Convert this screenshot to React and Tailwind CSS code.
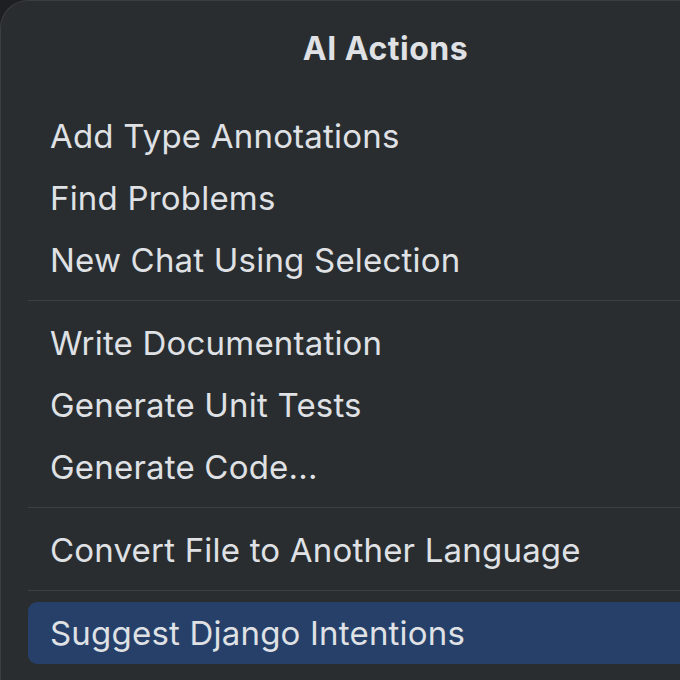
import React from 'react';

const groups = [
  ['Add Type Annotations', 'Find Problems', 'New Chat Using Selection'],
  ['Write Documentation', 'Generate Unit Tests', 'Generate Code...'],
  ['Convert File to Another Language'],
  ['Suggest Django Intentions'],
];

const selected = 'Suggest Django Intentions';

const App = () => {
  return (
    <div className="w-[680px] h-[680px] overflow-hidden bg-[#1e1f22]">
      <div
        className="w-[770px] h-[700px] bg-[#2a2d30] rounded-tl-[28px] border-t border-l border-[#3a3d41] text-[#dfe1e5]"
        style={{ fontFamily: 'Inter, "Noto Sans", sans-serif' }}
      >
        {/* Header */}
        <div className="h-[104px] flex items-start justify-center pt-[29px]">
          <h1 className="text-[32px] font-bold leading-[38px] tracking-[0.5px]">AI Actions</h1>
        </div>

        {/* Items */}
        <div className="pl-[27px]">
          {groups.map((group, gi) => (
            <div key={gi}>
              {gi > 0 && (
                <div className="pt-[9px] pb-[11px]">
                  <div className="h-px bg-[#3c3f43]" />
                </div>
              )}
              {group.map(item => (
                <div
                  key={item}
                  className={`h-[62px] flex items-center pl-[22px] rounded-[9px] ${
                    item === selected ? 'bg-[#26406a] h-[61px]' : ''
                  }`}
                >
                  <span className="text-[33px] leading-none tracking-[0.2px]">{item}</span>
                </div>
              ))}
            </div>
          ))}
        </div>
      </div>
    </div>
  );
};

export default App;
